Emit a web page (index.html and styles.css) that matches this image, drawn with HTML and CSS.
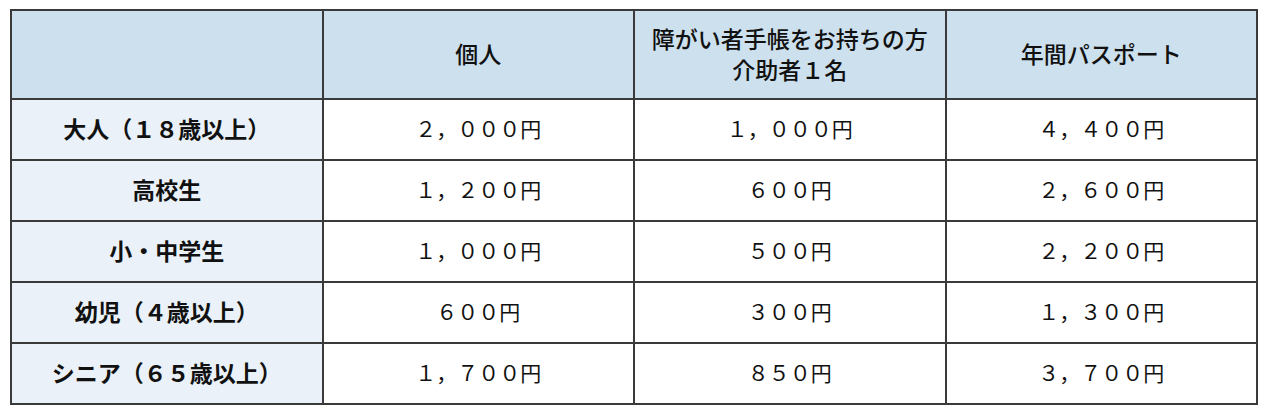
FILE: index.html
```html
<!DOCTYPE html>
<html lang="ja">
<head>
<meta charset="utf-8">
<link rel="stylesheet" href="styles.css">
</head>
<body>
<table class="fees">
  <thead>
    <tr class="head-row">
      <th class="corner"></th>
      <th>個人</th>
      <th>障がい者手帳をお持ちの方<br>介助者１名</th>
      <th>年間パスポート</th>
    </tr>
  </thead>
  <tbody>
    <tr>
      <th class="label">大人（１８歳以上）</th>
      <td>２，０００円</td>
      <td>１，０００円</td>
      <td>４，４００円</td>
    </tr>
    <tr>
      <th class="label">高校生</th>
      <td>１，２００円</td>
      <td>６００円</td>
      <td>２，６００円</td>
    </tr>
    <tr>
      <th class="label">小・中学生</th>
      <td>１，０００円</td>
      <td>５００円</td>
      <td>２，２００円</td>
    </tr>
    <tr>
      <th class="label">幼児（４歳以上）</th>
      <td>６００円</td>
      <td>３００円</td>
      <td>１，３００円</td>
    </tr>
    <tr>
      <th class="label">シニア（６５歳以上）</th>
      <td>１，７００円</td>
      <td>８５０円</td>
      <td>３，７００円</td>
    </tr>
  </tbody>
</table>
</body>
</html>
```
FILE: styles.css
```css
html, body {
  margin: 0;
  padding: 0;
  background: #ffffff;
}

body {
  padding: 9px 10px 0 10px;
  font-family: "Noto Sans CJK JP", "Noto Sans", sans-serif;
  color: #111111;
}

.fees {
  width: 1248px;
  border-collapse: collapse;
  table-layout: fixed;
  border: 2px solid #3a3a3a;
}

.fees th,
.fees td {
  border: 2px solid #3a3a3a;
  text-align: center;
  vertical-align: middle;
  padding: 0 0 2px 0;
  font-size: 22px;
  line-height: 31px;
}

.head-row th {
  height: 85px;
  background: #cde0ed;
  font-weight: 500;
  font-size: 23px;
}

.fees tbody tr {
  height: 61px;
}

.fees td {
  font-weight: 400;
  background: #ffffff;
  font-size: 21px;
}

.fees .label {
  background: #eaf1f8;
  font-weight: 700;
  font-size: 23px;
}
```
